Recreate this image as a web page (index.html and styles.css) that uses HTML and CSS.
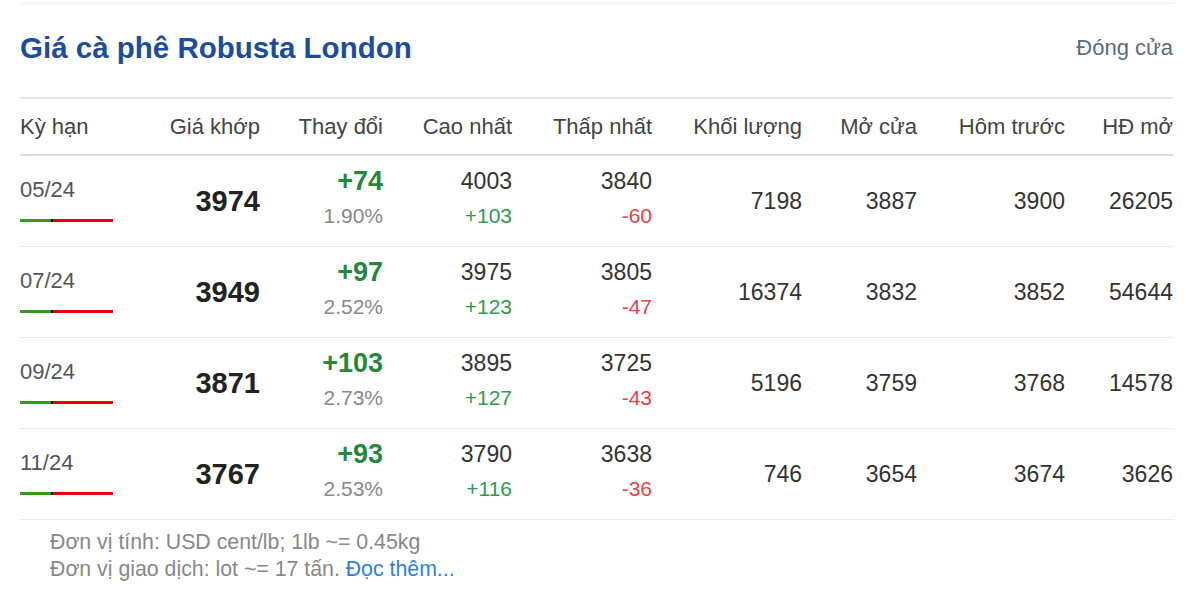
FILE: index.html
```html
<!DOCTYPE html>
<html lang="vi">
<head>
<meta charset="utf-8">
<title>Giá cà phê Robusta London</title>
<link rel="stylesheet" href="styles.css">
</head>
<body>
<div class="wrap">
  <div class="head">
    <h2 class="title">Giá cà phê Robusta London</h2>
    <span class="status">Đóng cửa</span>
  </div>
  <div class="table">
    <div class="row hrow">
      <div class="c left">Kỳ hạn</div>
      <div class="c">Giá khớp</div>
      <div class="c">Thay đổi</div>
      <div class="c">Cao nhất</div>
      <div class="c">Thấp nhất</div>
      <div class="c">Khối lượng</div>
      <div class="c">Mở cửa</div>
      <div class="c">Hôm trước</div>
      <div class="c">HĐ mở</div>
    </div>

    <div class="row">
      <div class="c left term"><div class="date">05/24</div><div class="bar"><span class="g"></span><span class="k"></span><span class="r"></span></div></div>
      <div class="c main">3974</div>
      <div class="c stack"><div class="chg">+74</div><div class="pct">1.90%</div></div>
      <div class="c stack"><div class="v">4003</div><div class="up">+103</div></div>
      <div class="c stack"><div class="v">3840</div><div class="down">-60</div></div>
      <div class="c v">7198</div>
      <div class="c v">3887</div>
      <div class="c v">3900</div>
      <div class="c v">26205</div>
    </div>

    <div class="row">
      <div class="c left term"><div class="date">07/24</div><div class="bar"><span class="g"></span><span class="k"></span><span class="r"></span></div></div>
      <div class="c main">3949</div>
      <div class="c stack"><div class="chg">+97</div><div class="pct">2.52%</div></div>
      <div class="c stack"><div class="v">3975</div><div class="up">+123</div></div>
      <div class="c stack"><div class="v">3805</div><div class="down">-47</div></div>
      <div class="c v">16374</div>
      <div class="c v">3832</div>
      <div class="c v">3852</div>
      <div class="c v">54644</div>
    </div>

    <div class="row">
      <div class="c left term"><div class="date">09/24</div><div class="bar"><span class="g"></span><span class="k"></span><span class="r"></span></div></div>
      <div class="c main">3871</div>
      <div class="c stack"><div class="chg">+103</div><div class="pct">2.73%</div></div>
      <div class="c stack"><div class="v">3895</div><div class="up">+127</div></div>
      <div class="c stack"><div class="v">3725</div><div class="down">-43</div></div>
      <div class="c v">5196</div>
      <div class="c v">3759</div>
      <div class="c v">3768</div>
      <div class="c v">14578</div>
    </div>

    <div class="row">
      <div class="c left term"><div class="date">11/24</div><div class="bar"><span class="g"></span><span class="k"></span><span class="r"></span></div></div>
      <div class="c main">3767</div>
      <div class="c stack"><div class="chg">+93</div><div class="pct">2.53%</div></div>
      <div class="c stack"><div class="v">3790</div><div class="up">+116</div></div>
      <div class="c stack"><div class="v">3638</div><div class="down">-36</div></div>
      <div class="c v">746</div>
      <div class="c v">3654</div>
      <div class="c v">3674</div>
      <div class="c v">3626</div>
    </div>
  </div>
  <div class="note">
    <p>Đơn vị tính: USD cent/lb; 1lb ~= 0.45kg</p>
    <p>Đơn vị giao dịch: lot ~= 17 tấn. <a href="#" class="more">Đọc thêm...</a></p>
  </div>
</div>
</body>
</html>
```

FILE: styles.css
```css
* { box-sizing: border-box; }
html, body { margin: 0; padding: 0; background: #fff; }
body {
  font-family: "Liberation Sans", Arial, sans-serif;
  color: #333;
  padding-top: 3px;
}
.wrap {
  width: 1153px;
  margin: 0 0 0 20px;
  border-top: 1px solid #eceff3;
}
.head {
  height: 95px;
  display: flex;
  align-items: center;
  justify-content: space-between;
  border-bottom: 2px solid #e6eaef;
  padding-bottom: 6px;
}
.title {
  margin: 0;
  font-size: 29.5px;
  font-weight: bold;
  color: #1d4c9e;
  line-height: 34px;
}
.status {
  font-size: 22px;
  color: #5d6b80;
}
.row {
  display: grid;
  grid-template-columns: 130px 110px 123px 129px 140px 150px 115px 148px 108px;
  align-items: center;
  height: 91px;
  border-bottom: 1px solid #e4e9ef;
}
.hrow {
  height: 57px;
  border-bottom: 2px solid #d8dde5;
  font-size: 22px;
  color: #444;
  padding-top: 1px;
}
.c {
  text-align: right;
  white-space: nowrap;
}
.c.left { text-align: left; }
.term { margin-top: -4px; }
.date {
  font-size: 22px;
  color: #555;
  line-height: 26px;
}
.bar {
  display: flex;
  width: 93px;
  height: 3px;
  margin-top: 16px;
}
.bar .g { width: 31px; background: #2e9d1c; }
.bar .k { width: 2px; background: #111; }
.bar .r { flex: 1; background: #e60000; }
.main {
  font-size: 29px;
  font-weight: bold;
  color: #222;
}
.stack { margin-top: -8px; }
.chg {
  font-size: 27px;
  font-weight: bold;
  color: #23883a;
  line-height: 30px;
}
.pct {
  font-size: 21px;
  color: #888;
  line-height: 24px;
  margin-top: 8px;
}
.v {
  font-size: 23px;
  color: #333;
  line-height: 30px;
}
.up, .down {
  font-size: 21px;
  line-height: 24px;
  margin-top: 8px;
}
.up { color: #2e9a52; }
.down { color: #e8424a; }
.note {
  padding: 9px 0 0 30px;
  font-size: 21.3px;
  line-height: 27px;
  color: #888;
}
.note p { margin: 0; }
.more { color: #2f7fe0; text-decoration: none; }
```
